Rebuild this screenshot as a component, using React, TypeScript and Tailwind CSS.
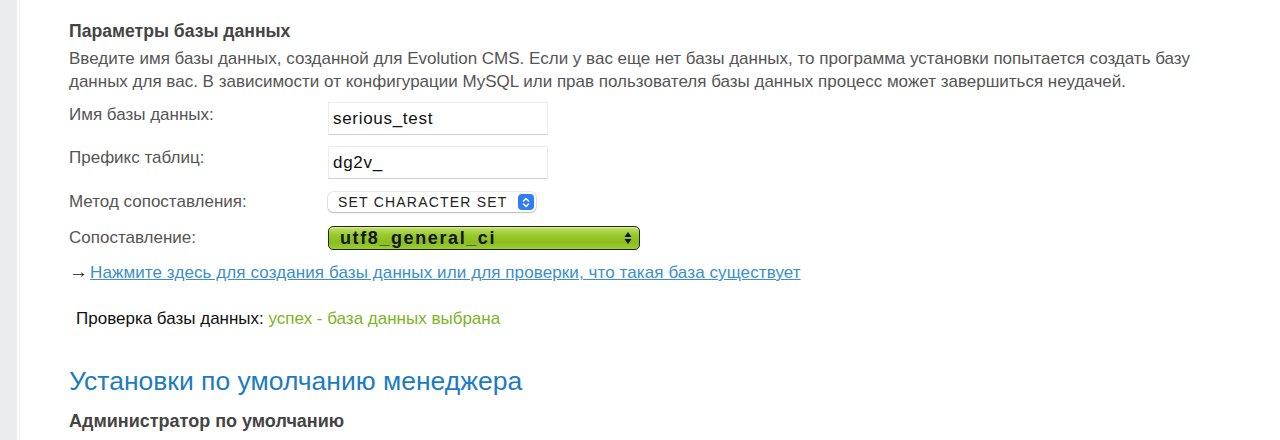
import React from "react";

const font = { fontFamily: '"Liberation Sans", Arial, sans-serif' };

function Row({ label, pt, children }: { label: string; pt: string; children: React.ReactNode }) {
  return (
    <div className="flex items-start">
      <div className={"w-[259px] text-[17px] leading-[20px] text-[#555] " + pt}>{label}</div>
      <div>{children}</div>
    </div>
  );
}

export default function App() {
  return (
    <div className="flex h-[440px] w-[1280px] overflow-hidden bg-white" style={font}>
      <div className="w-[17px] shrink-0 bg-[#e9ecee]" />
      <div className="w-[3px] shrink-0 border-r border-[#f1f2f3]" />
      <div className="flex-1 pl-[49px] pt-[19px]">
        <h3 className="text-[17.6px] font-bold leading-[24px] text-[#444]">Параметры базы данных</h3>
        <p className="mt-[4px] w-[1140px] text-[17px] leading-[23px] text-[#555]">
          Введите имя базы данных, созданной для Evolution CMS. Если у вас еще нет базы данных, то программа установки попытается создать базу данных для вас. В зависимости от конфигурации MySQL или прав пользователя базы данных процесс может завершиться неудачей.
        </p>
        <div className="mt-[9px] flex flex-col">
          <Row label="Имя базы данных:" pt="pt-[3px]">
            <div className="flex h-[33px] w-[220px] items-center border border-[#ececec] border-b-[#d0d0d0] pl-[4px] text-[17px] tracking-[0.7px] text-[#111]">
              serious_test
            </div>
          </Row>
          <div className="h-[11px]" />
          <Row label="Префикс таблиц:" pt="pt-[2px]">
            <div className="flex h-[33px] w-[220px] items-center border border-[#ececec] border-b-[#d0d0d0] pl-[4px] text-[17px] tracking-[0.7px] text-[#111]">
              dg2v_
            </div>
          </Row>
          <div className="h-[13px]" />
          <Row label="Метод сопоставления:" pt="pt-0">
            <div className="flex h-[20px] w-[208px] items-center justify-between rounded-[5px] bg-white pl-[10px] pr-[2px] shadow-[0_0_0_0.5px_rgba(0,0,0,0.18),0_1px_1.5px_rgba(0,0,0,0.2)]">
              <span className="text-[14px] tracking-[1.2px] text-[#222]">SET CHARACTER SET</span>
              <span className="flex h-[16px] w-[16px] items-center justify-center rounded-[4px] bg-[#2f7cf6]">
                <svg width="8" height="11" viewBox="0 0 8 11" fill="none" stroke="white" strokeWidth="1.5" strokeLinecap="round" strokeLinejoin="round">
                  <path d="M1.5 4 L4 1.5 L6.5 4" />
                  <path d="M1.5 7 L4 9.5 L6.5 7" />
                </svg>
              </span>
            </div>
          </Row>
          <div className="h-[14px]" />
          <Row label="Сопоставление:" pt="pt-[2px]">
            <div className="flex h-[24px] w-[312px] items-center justify-between rounded-[5px] border border-[#1e2a10] bg-[linear-gradient(to_bottom,#c2e274_0%,#9acb2c_35%,#8abd1c_70%,#9dcd38_100%)] pl-[11px] pr-[7px] shadow-[inset_0_1px_0_rgba(255,255,255,0.35)]">
              <span className="text-[18px] font-bold tracking-[1.6px] text-[#141414]">utf8_general_ci</span>
              <svg width="8" height="14" viewBox="0 0 8 14" fill="#111">
                <path d="M4 1 L7.5 6 L0.5 6 Z" />
                <path d="M4 13 L7.5 8 L0.5 8 Z" />
              </svg>
            </div>
          </Row>
        </div>
        <div className="mt-[11px] flex items-baseline text-[17px] leading-[22px] text-[#222]">
          <span className="mr-[2px] text-[19px]">→</span>
          <a className="tracking-[0.1px] text-[#3a8ecb] underline" href="#">Нажмите здесь для создания базы данных или для проверки, что такая база существует</a>
        </div>
        <div className="mt-[24px] pl-[7px] text-[17px] leading-[22px] text-[#111]">
          Проверка базы данных: <span className="text-[#7ab51d]">успех - база данных выбрана</span>
        </div>
        <h2 className="mt-[35px] text-[26.5px] leading-[32px] text-[#1d7bc1]">Установки по умолчанию менеджера</h2>
        <h3 className="mt-[12px] text-[18px] font-bold leading-[24px] text-[#444]">Администратор по умолчанию</h3>
      </div>
    </div>
  );
}
